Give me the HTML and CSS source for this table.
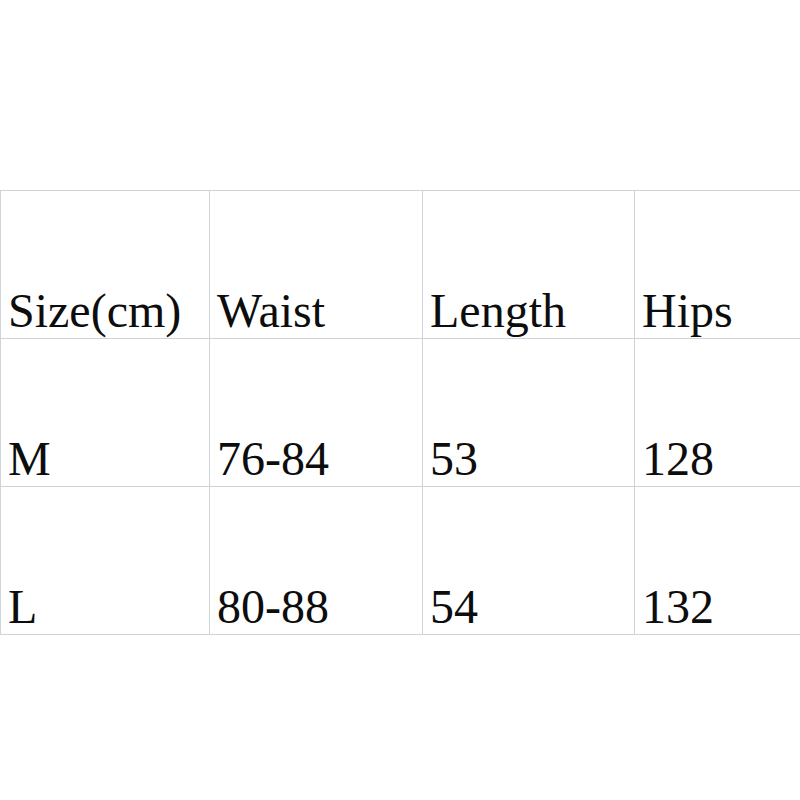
FILE: index.html
```html
<!DOCTYPE html>
<html>
<head>
<meta charset="utf-8">
<link rel="stylesheet" href="styles.css">
</head>
<body>
<table class="size-table">
  <colgroup>
    <col class="c1"><col class="c2"><col class="c3"><col class="c4">
  </colgroup>
  <tr><td>Size(cm)</td><td>Waist</td><td>Length</td><td>Hips</td></tr>
  <tr><td>M</td><td>76-84</td><td>53</td><td>128</td></tr>
  <tr><td>L</td><td>80-88</td><td>54</td><td>132</td></tr>
</table>
</body>
</html>
```

FILE: styles.css
```css
html, body {
  margin: 0;
  padding: 0;
  background: #ffffff;
}
.size-table {
  margin-top: 190px;
  border-collapse: collapse;
  table-layout: fixed;
  width: 800px;
  font-family: "Liberation Serif", "Times New Roman", serif;
  font-size: 48px;
  color: #0d0d0d;
}
.c1 { width: 209px; }
.c2 { width: 213px; }
.c3 { width: 212px; }
.c4 { width: 166px; }
.size-table td {
  border: 1px solid #cfd3da;
  height: 147px;
  padding: 0 0 0 7px;
  vertical-align: bottom;
  line-height: normal;
  white-space: nowrap;
}
.size-table td:last-child {
  border-right: none;
}
```
